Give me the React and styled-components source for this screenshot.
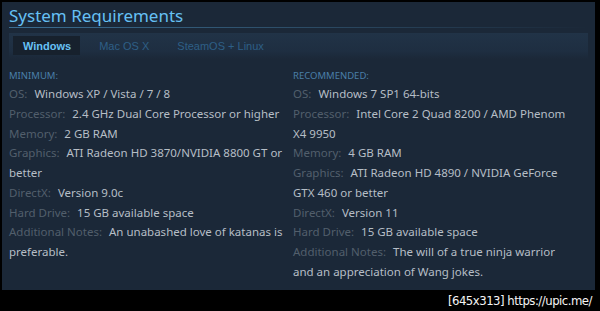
import React from "react";
import styled, { createGlobalStyle } from "styled-components";

const Global = createGlobalStyle`
  html, body { margin: 0; padding: 0; background: #000; }
  body { width: 600px; height: 311px; overflow: hidden; }
`;

const Page = styled.div`
  width: 600px;
  height: 311px;
  background: #000;
  padding: 2px 5px 0 2px;
  box-sizing: border-box;
  display: flex;
  flex-direction: column;
`;

const Panel = styled.section`
  background: #1b2838;
  height: 288px;
  box-sizing: border-box;
  padding: 3px 7px 0 7px;
  font-family: "Noto Sans", "Open Sans", sans-serif;
`;

const Title = styled.h2`
  margin: 0;
  font-weight: 400;
  font-size: 17px;
  line-height: 22px;
  color: #66c0f4;
  border-bottom: 1px solid transparent;
  border-image: linear-gradient(to right, #3b6e92 0%, #2c4c66 50%, rgba(27, 40, 56, 0) 100%) 1;
`;

const TabBar = styled.div`
  margin-top: 5px;
  height: 26px;
  padding: 3px 0 0 4px;
  box-sizing: border-box;
  display: flex;
  align-items: flex-start;
  gap: 10px;
  background: linear-gradient(to bottom, #213347 0%, #1e2e41 70%, #1b2838 100%);
`;

const Tab = styled.div`
  height: 19px;
  padding: 0 ${(p) => (p.$active ? "9px 0 10px" : "9px")};
  display: flex;
  align-items: center;
  font-family: "Liberation Sans", Arial, sans-serif;
  font-size: 11px;
  font-weight: ${(p) => (p.$active ? 700 : 400)};
  color: ${(p) => (p.$active ? "#67c1f5" : "#2e5f86")};
  background: ${(p) => (p.$active ? "#17212d" : "transparent")};
`;

const Columns = styled.div`
  display: grid;
  grid-template-columns: 280px 282px;
  column-gap: 4px;
  padding-top: 9px;
`;

const Column = styled.div`
  font-size: 11.5px;
  line-height: 19.75px;
`;

const Heading = styled.div`
  font-size: 9.5px;
  line-height: 16px;
  text-transform: uppercase;
  color: #4a7fa8;
`;

const Row = styled.div`
  color: #b6bec6;
`;

const Label = styled.span`
  color: #525f6c;
  margin-right: 7px;
`;

const Footer = styled.div`
  flex: 1;
  display: flex;
  justify-content: flex-end;
  align-items: center;
  padding-right: 3px;
  font-family: "DejaVu Sans Condensed", "DejaVu Sans", sans-serif;
  font-size: 13px;
  color: #f4f4f4;
  letter-spacing: -0.5px;
`;

const minimum = [
  ["OS:", "Windows XP / Vista / 7 / 8"],
  ["Processor:", "2.4 GHz Dual Core Processor or higher"],
  ["Memory:", "2 GB RAM"],
  ["Graphics:", "ATI Radeon HD 3870/NVIDIA 8800 GT or better"],
  ["DirectX:", "Version 9.0c"],
  ["Hard Drive:", "15 GB available space"],
  ["Additional Notes:", "An unabashed love of katanas is preferable."],
];

const recommended = [
  ["OS:", "Windows 7 SP1 64-bits"],
  ["Processor:", "Intel Core 2 Quad 8200 / AMD Phenom X4 9950"],
  ["Memory:", "4 GB RAM"],
  ["Graphics:", "ATI Radeon HD 4890 / NVIDIA GeForce GTX 460 or better"],
  ["DirectX:", "Version 11"],
  ["Hard Drive:", "15 GB available space"],
  ["Additional Notes:", "The will of a true ninja warrior and an appreciation of Wang jokes."],
];

function ReqList({ title, items }) {
  return (
    <Column>
      <Heading>{title}</Heading>
      {items.map(([l, v]) => (
        <Row key={l}>
          <Label>{l}</Label>
          {v}
        </Row>
      ))}
    </Column>
  );
}

export default function App() {
  return (
    <>
      <Global />
      <Page>
        <Panel>
          <Title>System Requirements</Title>
          <TabBar>
            <Tab $active>Windows</Tab>
            <Tab>Mac OS X</Tab>
            <Tab>SteamOS + Linux</Tab>
          </TabBar>
          <Columns>
            <ReqList title="Minimum:" items={minimum} />
            <ReqList title="Recommended:" items={recommended} />
          </Columns>
        </Panel>
        <Footer>[645x313] https://upic.me/</Footer>
      </Page>
    </>
  );
}
